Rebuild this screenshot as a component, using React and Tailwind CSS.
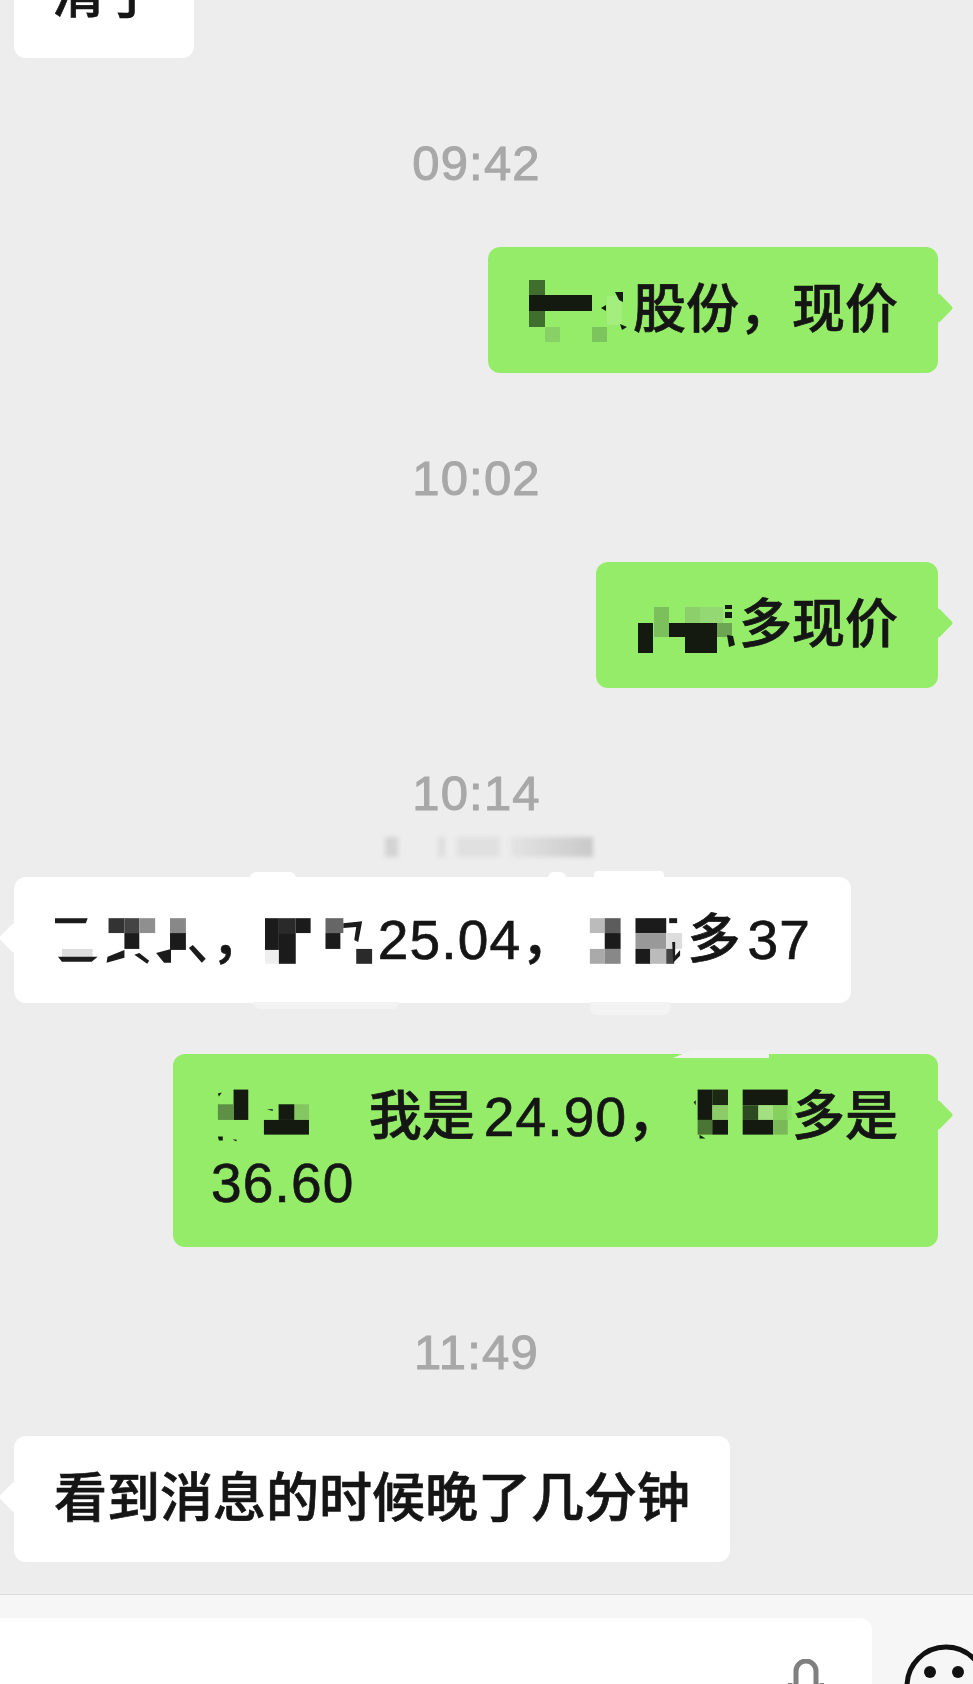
import React from "react";

const DARK = "#141a10";
const INK = "#1b1b1b";

// pixelated censor blocks, coords are page px so the viewBox does the offset
const Mosaic = ({ x, y, w, rects = [], marks = [], fill = DARK }) => (
  <svg
    className="inline-block align-top"
    width={w}
    height={66}
    viewBox={`${x} ${y} ${w} 66`}
  >
    {rects.map(([rx, ry, rw, rh, c], i) => (
      <rect key={i} x={rx} y={ry} width={rw} height={rh} fill={c} />
    ))}
    {marks.map((pts, i) => (
      <polygon key={i} points={pts} fill={fill} />
    ))}
  </svg>
);

const Num = ({ children }) => <span className="text-[55px] tracking-[1.2px]">{children}</span>;

const Time = ({ children }) => (
  <div className="mt-[77px] mb-[56px] h-[56px] pr-[20px] flex items-center justify-center text-[49px] leading-[56px] tracking-[1.2px] text-[#a8a8a8] [-webkit-text-stroke:1px_#a8a8a8]">
    {children}
  </div>
);

const Bubble = ({ mine, className = "", children, extra }) => (
  <div className={`flex ${mine ? "justify-end pr-[35px]" : "justify-start pl-[14px]"}`}>
    <div
      className={`relative whitespace-nowrap rounded-[12px] py-[30px] px-[40px] text-[53px] leading-[66px] font-medium text-[#151515] [-webkit-text-stroke:0.7px_#151515] ${
        mine ? "bg-[#95ec69]" : "bg-white"
      } ${className}`}
    >
      <span
        className={`absolute top-[50px] w-[22px] h-[22px] rotate-45 rounded-[3px] ${
          mine ? "-right-[11px] bg-[#95ec69]" : "-left-[11px] bg-white"
        }`}
      />
      {extra}
      <div className="relative">{children}</div>
    </div>
  </div>
);

export default function App() {
  return (
    <div className="w-[973px] h-[1684px] overflow-hidden flex flex-col bg-[#ededed] font-['Liberation_Sans','Noto_Sans_CJK_SC',sans-serif]">
      <div className="flex-1 min-h-0">
        <div className="-mt-[68px] pl-[14px]">
          <div className="w-[180px] whitespace-nowrap rounded-[12px] bg-white py-[30px] px-[38px] text-[53px] leading-[66px] font-medium text-[#151515] [-webkit-text-stroke:0.7px_#151515]">
            清了
          </div>
        </div>

        <Time>09:42</Time>
        <Bubble mine>
          <Mosaic
            x={528}
            y={277}
            w={105}
            rects={[
              [529, 280, 16, 47, "#3f6e2e"],
              [545, 327, 15, 15, "#88d166"],
              [592, 327, 15, 15, "#7dc45c"],
              [607, 296, 15, 29, "#a4ee80"],
              [529, 295, 63, 16, DARK],
            ]}
            marks={["615,292 623,292 623,302 619,300", "601,308 606,305 606,311", "620,324 627,327 622,330"]}
          />
          股份，现价
        </Bubble>

        <Time>10:02</Time>
        <Bubble mine className="w-[342px]">
          <Mosaic
            x={636}
            y={592}
            w={103}
            rects={[
              [654, 607, 15, 30, "#7cc05c"],
              [685, 607, 15, 16, "#8ccf6b"],
              [700, 607, 23, 16, "#93d873"],
              [717, 623, 15, 14, "#6da552"],
              [638, 623, 15, 30, DARK],
              [669, 623, 16, 14, DARK],
              [685, 623, 32, 30, DARK],
            ]}
            marks={["725,605 732,605 732,609 725,609", "725,612 732,612 732,618 725,618", "727,635 733,636 735,645 729,647"]}
          />
          多现价
        </Bubble>

        <div className="relative">
          {/* blurred-out nickname */}
          <div className="absolute left-[385px] top-[72px] w-[208px] h-[20px] flex blur-[2px]">
            <div className="w-[13px] bg-[#d4d4d4]" />
            <div className="w-[7px] ml-[40px] bg-[#dedede]" />
            <div className="w-[43px] ml-[12px] bg-[#e0e0e0]" />
            <div className="flex-1 ml-[10px] bg-gradient-to-r from-[#e4e4e4] to-[#c9c9c9]" />
          </div>
          <Time>10:14</Time>
        </div>
        <Bubble
          className="w-[837px]"
          extra={
            <>
              <div className="absolute left-[236px] -top-[5px] w-[46px] h-[6px] rounded-t-[6px] bg-white" />
              <div className="absolute left-[534px] -top-[5px] w-[18px] h-[6px] rounded-t-[6px] bg-white" />
              <div className="absolute left-[580px] -top-[6px] w-[70px] h-[7px] rounded-t-[4px] bg-white" />
              <div className="absolute left-[240px] -bottom-[6px] w-[145px] h-[7px] rounded-b-[6px] bg-[#f3f3f3]" />
              <div className="absolute left-[576px] -bottom-[12px] w-[80px] h-[13px] rounded-b-[6px] bg-[#f3f3f3]" />
            </>
          }
        >
          <div className="flex">
            <Mosaic
              x={54}
              y={907}
              w={159}
              fill={INK}
              rects={[
                [62, 949, 31, 8, "#dddddd"],
                [109, 918, 16, 15, "#333333"],
                [125, 918, 15, 15, "#444444"],
                [140, 918, 16, 15, "#8f8f8f"],
                [125, 933, 15, 16, INK],
                [171, 918, 16, 15, "#888888"],
                [171, 933, 16, 17, INK],
              ]}
              marks={[
                "55,918 88,918 86,923 55,923",
                "58,957 98,957 92,962 62,962",
                "108,957 125,950 125,958 107,963",
                "135,955 140,953 150,961 148,964",
                "157,953 172,949 172,963 165,963",
                "190,948 194,945 207,959 203,963",
              ]}
            />
            <span>，</span>
            <Mosaic
              x={266}
              y={907}
              w={114}
              fill={INK}
              rects={[
                [265, 950, 15, 14, "#eeeeee"],
                [265, 918, 15, 32, INK],
                [280, 918, 17, 15, "#2a2a2a"],
                [297, 918, 15, 15, INK],
                [280, 933, 17, 31, INK],
                [327, 918, 18, 15, "#666666"],
                [327, 933, 15, 16, INK],
                [358, 949, 16, 15, "#2a2a2a"],
              ]}
              marks={["345,923 364,921 360,942 356,940 358,927 345,928"]}
            />
            <Num>25.04</Num>
            <span>，</span>
            <Mosaic
              x={576}
              y={907}
              w={114}
              fill={INK}
              rects={[
                [592, 918, 15, 15, "#bbbbbb"],
                [607, 918, 16, 15, "#5c5c5c"],
                [607, 933, 16, 16, INK],
                [592, 949, 15, 15, "#aaaaaa"],
                [607, 949, 16, 15, "#888888"],
                [638, 918, 31, 15, INK],
                [638, 933, 31, 16, "#999999"],
                [638, 949, 15, 15, INK],
                [653, 949, 16, 15, "#bbbbbb"],
                [669, 933, 16, 16, "#dddddd"],
                [669, 949, 8, 15, "#444444"],
              ]}
              marks={["672,918 680,918 680,923 672,923", "675,942 678,942 678,956 683,950 683,956 676,963"]}
            />
            <span>多</span>
            <Num>
              <span className="ml-[7px]">37</span>
            </Num>
          </div>
        </Bubble>

        <div className="h-[51px]" />
        <Bubble
          mine
          className="w-[765px]"
          extra={
            <div className="absolute left-[500px] -top-[4px] w-[96px] h-[8px] bg-[#f1f1f1] [clip-path:polygon(0_100%,20%_0,100%_0,100%_100%)]" />
          }
        >
          <div className="flex">
            <Mosaic
              x={213}
              y={1084}
              w={159}
              rects={[
                [234, 1089, 15, 31, DARK],
                [218, 1104, 16, 16, "#5d9044"],
                [296, 1104, 15, 16, "#84c662"],
                [280, 1104, 16, 16, DARK],
                [265, 1120, 46, 15, DARK],
              ]}
              marks={["218,1093 222,1092 219,1096", "218,1137 223,1137 223,1141 219,1141", "233,1140 237,1140 237,1142", "268,1109 274,1109 274,1111"]}
            />
            <span>我是</span>
            <Num>
              <span className="ml-[9px]">24.90</span>
            </Num>
            <span>，</span>
            <Mosaic
              x={683}
              y={1084}
              w={114}
              rects={[
                [701, 1089, 15, 31, DARK],
                [716, 1089, 16, 16, "#1c2a14"],
                [716, 1105, 16, 15, "#8ccb68"],
                [701, 1120, 15, 15, "#4a7535"],
                [716, 1120, 16, 15, DARK],
                [747, 1089, 46, 16, DARK],
                [747, 1105, 16, 15, "#2e4a22"],
                [763, 1105, 15, 15, "#a2e080"],
                [778, 1105, 15, 15, "#86d060"],
                [747, 1120, 31, 15, DARK],
                [778, 1120, 15, 15, "#7ab858"],
                [793, 1105, 4, 15, "#8fe066"],
              ]}
              marks={["697,1102 699,1100 699,1105", "703,1135 709,1139 703,1139"]}
            />
            <span>多是</span>
          </div>
          <Num>
            <span className="-ml-[2px] inline-block">36.60</span>
          </Num>
        </Bubble>

        <Time>11:49</Time>
        <Bubble>看到消息的时候晚了几分钟</Bubble>
      </div>

      {/* input bar */}
      <div className="h-[90px] shrink-0 flex items-start overflow-hidden border-t border-[#d9d9d9] bg-[#f6f6f6] pt-[23px]">
        <div className="w-[872px] h-[80px] shrink-0 rounded-r-[12px] bg-white flex justify-end pr-[48px] pt-[41px]">
          <svg width="36" height="40" viewBox="0 0 36 40" fill="none" stroke="#808080" strokeWidth="5">
            <rect x="8" y="2" width="20" height="44" rx="10" />
            <path d="M2 24v4a16 16 0 0 0 32 0v-4" />
          </svg>
        </div>
        <svg className="ml-[32px] mt-[26px] shrink-0" width="84" height="84" viewBox="0 0 84 84" fill="none">
          <circle cx="42" cy="42" r="39" stroke="#111111" strokeWidth="5" />
          <circle cx="26" cy="28" r="6" fill="#111111" />
          <circle cx="54" cy="28" r="6" fill="#111111" />
        </svg>
      </div>
    </div>
  );
}
